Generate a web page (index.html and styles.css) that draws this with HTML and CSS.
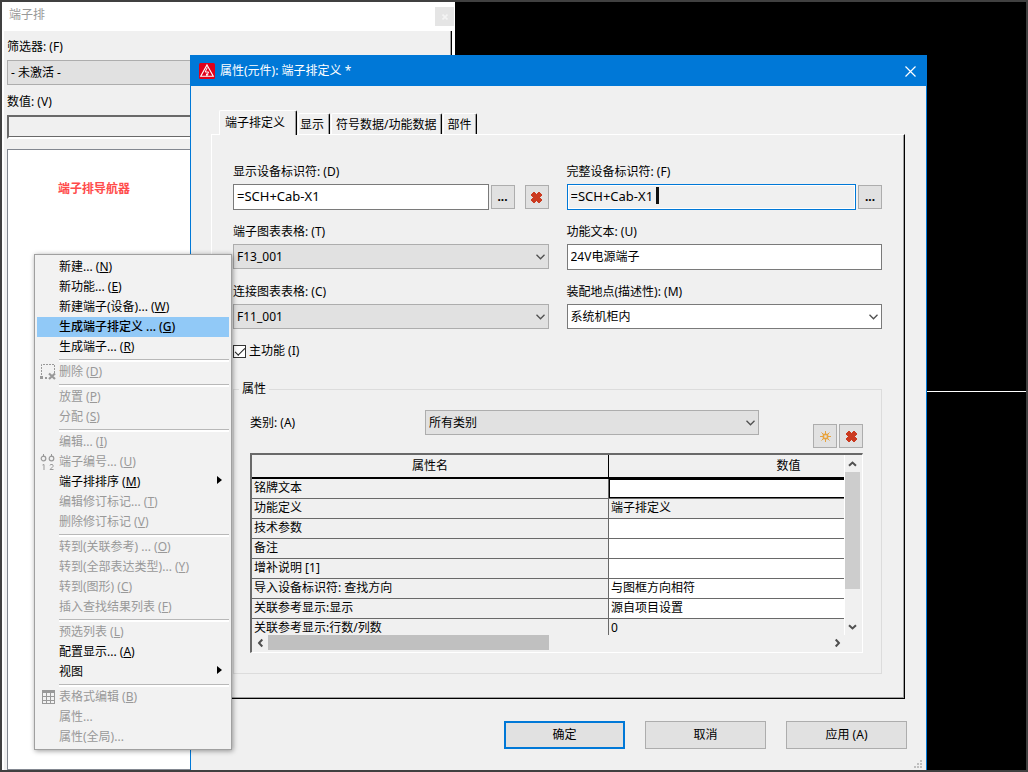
FILE: index.html
```html
<!DOCTYPE html>
<html lang="zh-CN">
<head>
<meta charset="utf-8">
<title>属性(元件): 端子排定义</title>
<link rel="stylesheet" href="styles.css">
</head>
<body>
<svg class="sprite" aria-hidden="true">
  <symbol id="chevron" viewBox="0 0 9 6"><path d="M.5 .8 4.5 4.8 8.5 .8" fill="none" stroke="#505050" stroke-width="1.3"/></symbol>
  <symbol id="arrow" viewBox="0 0 9 6"><path d="M1 4.8 4.5 1.5 8 4.8" fill="none" stroke="#505050" stroke-width="2"/></symbol>
  <symbol id="cross" viewBox="0 0 11 11"><path d="M2 0h2v1h1v1h1V1h1V0h2v1h1v1h1v2h-1v1H9v1h1v1h1v2h-1v1H9v1H7v-1H6V9H5v1H4v1H2v-1H1V9H0V7h1V6h1V5H1V4H0V2h1V1h1z" fill="#cb3a20"/></symbol>
</svg>
<div class="desktop">
  <div class="guide"></div>

  <section class="navigator">
    <header class="navigator-title"><span>端子排</span><button class="navigator-close" aria-label="关闭"><svg viewBox="0 0 6 6"><path d="M.5 .5 5.5 5.5M5.5 .5 .5 5.5" stroke="#f4f4f4" stroke-width="1.6"/></svg></button></header>
    <div class="navigator-body">
      <label for="filter">筛选器: (F)</label>
      <div class="select"><select id="filter"><option>- 未激活 -</option></select></div>
      <label for="value">数值: (V)</label>
      <input id="value" class="sunken" type="text">
      <div class="tree"><span>端子排导航器</span></div>
    </div>
  </section>

  <section class="dialog" role="dialog" aria-labelledby="dialog-title">
    <header class="dialog-title">
      <svg class="logo" viewBox="0 0 16 16"><rect width="16" height="16" rx="1.5" fill="#e2001a"/><path d="M8 2 14.3 13.3H1.7z" fill="none" stroke="#fff" stroke-width="1.1"/><path d="M8.3 4.5 6.2 9h3.4L7.8 12.3M7.4 10.6l.3 2 1.6-1.2" fill="none" stroke="#fff"/></svg>
      <h1 id="dialog-title">属性(元件): 端子排定义 *</h1>
      <button class="dialog-close" aria-label="关闭"><svg viewBox="0 0 11 11"><path d="M.5 .5 10.5 10.5M10.5 .5 .5 10.5" stroke="#fff" stroke-width="1.2"/></svg></button>
    </header>
    <div class="dialog-body">
      <div class="tabs" role="tablist">
        <button class="tab active" role="tab" aria-selected="true">端子排定义</button>
        <button class="tab" role="tab">显示</button>
        <button class="tab" role="tab">符号数据/功能数据</button>
        <button class="tab" role="tab">部件</button>
      </div>
      <div class="page" role="tabpanel">
        <div class="fields">
          <div class="field">
            <label for="dt">显示设备标识符: (D)</label>
            <div class="line"><input id="dt" class="text tag" type="text" value="=SCH+Cab-X1"><button class="small">...</button><button class="small delete" aria-label="删除"><svg class="cross"><use href="#cross"/></svg></button></div>
          </div>
          <div class="field">
            <label for="fdt">完整设备标识符: (F)</label>
            <div class="line"><div class="focus-box"><input id="fdt" class="text tag focused" type="text" value="=SCH+Cab-X1"><span class="caret"></span></div><button class="small">...</button></div>
          </div>
          <div class="field">
            <label for="tform">端子图表表格: (T)</label>
            <div class="select"><select id="tform"><option>F13_001</option></select><svg><use href="#chevron"/></svg></div>
          </div>
          <div class="field">
            <label for="ftext">功能文本: (U)</label>
            <input id="ftext" class="text" type="text" value="24V电源端子">
          </div>
          <div class="field">
            <label for="cform">连接图表表格: (C)</label>
            <div class="select"><select id="cform"><option>F11_001</option></select><svg><use href="#chevron"/></svg></div>
          </div>
          <div class="field">
            <label for="site">装配地点(描述性): (M)</label>
            <div class="select light"><select id="site"><option>系统机柜内</option></select><svg><use href="#chevron"/></svg></div>
          </div>
        </div>
        <label class="check"><input type="checkbox" checked>主功能 (I)</label>
        <fieldset class="group">
          <legend>属性</legend>
          <div class="category">
            <label for="cat">类别: (A)</label>
            <div class="select"><select id="cat"><option>所有类别</option></select><svg><use href="#chevron"/></svg></div>
            <div class="tools">
              <button class="small" aria-label="新建"><svg class="star" viewBox="0 0 11 11"><path d="M5.5 0v3M5.5 8v3M0 5.5h3M8 5.5h3M1.5 1.5l2 2M7.5 7.5l2 2M9.5 1.5l-2 2M3.5 7.5l-2 2" stroke="#e8a33d"/><rect x="3.5" y="3.5" width="4" height="4" fill="none" stroke="#e8a33d" stroke-width="1.6"/></svg></button>
              <button class="small" aria-label="删除"><svg class="cross"><use href="#cross"/></svg></button>
            </div>
          </div>
          <div class="sheet">
            <div class="viewport">
              <table>
                <colgroup><col class="name-col"><col></colgroup>
                <thead><tr><th>属性名</th><th>数值</th></tr></thead>
                <tbody>
                  <tr><th>铭牌文本</th><td class="current"></td></tr>
                  <tr><th>功能定义</th><td class="locked">端子排定义</td></tr>
                  <tr><th>技术参数</th><td></td></tr>
                  <tr><th>备注</th><td></td></tr>
                  <tr><th>增补说明 [1]</th><td></td></tr>
                  <tr><th>导入设备标识符: 查找方向</th><td>与图框方向相符</td></tr>
                  <tr><th>关联参考显示:显示</th><td>源自项目设置</td></tr>
                  <tr><th>关联参考显示:行数/列数</th><td class="locked">0</td></tr>
                </tbody>
              </table>
            </div>
            <div class="vbar"><button aria-label="向上"><svg><use href="#arrow"/></svg></button><div class="track"><div class="thumb"></div></div><button aria-label="向下"><svg class="down"><use href="#arrow"/></svg></button></div>
            <div class="hbar"><button aria-label="向左"><svg class="left"><use href="#arrow"/></svg></button><div class="track"><div class="thumb"></div></div><button aria-label="向右"><svg class="right"><use href="#arrow"/></svg></button></div>
          </div>
        </fieldset>
      </div>
      <footer class="actions">
        <button class="push default">确定</button>
        <button class="push">取消</button>
        <button class="push">应用 (A)</button>
      </footer>
    </div>
    <svg class="grip" viewBox="0 0 8 8"><path d="M6 0h2v2H6zM3 3h2v2H3zM6 3h2v2H6zM0 6h2v2H0zM3 6h2v2H3zM6 6h2v2H6z" fill="#bfbfbf"/></svg>
  </section>

  <div class="menu" role="menu">
    <button class="item" role="menuitem">新建... (<u>N</u>)</button>
    <button class="item" role="menuitem">新功能... (<u>E</u>)</button>
    <button class="item" role="menuitem">新建端子(设备)... (<u>W</u>)</button>
    <button class="item selected" role="menuitem">生成端子排定义 ... (<u>G</u>)</button>
    <button class="item" role="menuitem">生成端子... (<u>R</u>)</button>
    <hr>
    <button class="item" role="menuitem" disabled><svg class="icon" viewBox="0 0 16 16"><path d="M1.5 11V.5h13V9" fill="none" stroke="#999" stroke-dasharray="2 1"/><path d="M0 12h3v3H0zM5 13h2v2H5z" fill="#999"/><path d="M9 9.500l6 5.500M15 9.500l-6 5.500" stroke="#999" stroke-width="2.200"/></svg>删除 (<u>D</u>)</button>
    <hr>
    <button class="item" role="menuitem" disabled>放置 (<u>P</u>)</button>
    <button class="item" role="menuitem" disabled>分配 (<u>S</u>)</button>
    <hr>
    <button class="item" role="menuitem" disabled>编辑... (<u>I</u>)</button>
    <button class="item" role="menuitem" disabled><svg class="icon" viewBox="0 0 16 16"><g fill="none" stroke="#999"><circle cx="3.500" cy="4.500" r="2.300" stroke-width="1.200"/><circle cx="11.500" cy="4.500" r="2.300" stroke-width="1.200"/><path d="M3.500 0v2.500M11.500 0v2.500M2.500 11l1.500-.5V16M10 11.500V11l.5-.5h2l.5.5v1.500l-3 3h3.500"/></g></svg>端子编号... (<u>U</u>)</button>
    <button class="item submenu" role="menuitem">端子排排序 (<u>M</u>)</button>
    <button class="item" role="menuitem" disabled>编辑修订标记... (<u>T</u>)</button>
    <button class="item" role="menuitem" disabled>删除修订标记 (<u>V</u>)</button>
    <hr>
    <button class="item" role="menuitem" disabled>转到(关联参考) ... (<u>O</u>)</button>
    <button class="item" role="menuitem" disabled>转到(全部表达类型)... (<u>Y</u>)</button>
    <button class="item" role="menuitem" disabled>转到(图形) (<u>C</u>)</button>
    <button class="item" role="menuitem" disabled>插入查找结果列表 (<u>F</u>)</button>
    <hr>
    <button class="item" role="menuitem" disabled>预选列表 (<u>L</u>)</button>
    <button class="item" role="menuitem">配置显示... (<u>A</u>)</button>
    <button class="item submenu" role="menuitem">视图</button>
    <hr>
    <button class="item" role="menuitem" disabled><svg class="icon" viewBox="0 0 16 16"><path d="M2 1h13v3H2z" fill="#999"/><path d="M2.500 1v14M6.500 4v11M10.500 4v11M14.500 1v14M2 7.500h13M2 11.500h13M2 14.500h13" fill="none" stroke="#999"/></svg>表格式编辑 (<u>B</u>)</button>
    <button class="item" role="menuitem" disabled>属性...</button>
    <button class="item" role="menuitem" disabled>属性(全局)...</button>
  </div>
</div>
</body>
</html>
```
FILE: styles.css
```css
* { box-sizing: border-box; }
body {
  margin: 0;
  font: 12px/20px "Noto Sans", "Noto Sans CJK SC", sans-serif;
  color: #000;
}
button, input, select, legend, h1 { font: inherit; color: inherit; margin: 0; }
button { padding: 0; border: 0; background: none; }
input, select { border-radius: 0; outline: 0; }
svg { display: block; flex: none; }
.sprite { position: absolute; width: 0; height: 0; }

.desktop {
  position: relative;
  min-height: 100vh;
  overflow: hidden;
  background: #000;
  border: 2px solid #404040;
}
.guide { position: absolute; top: 389px; left: 0; right: 0; height: 1px; background: #fff; }

/* navigator window */
.navigator {
  position: absolute;
  top: 0; bottom: 0; left: 0;
  width: 453px;
  display: flex;
  flex-direction: column;
  padding: 0 3px 0 2px;
  background: #fff;
}
.navigator-title {
  display: flex;
  justify-content: space-between;
  height: 29px;
  padding: 3px 0 0 5px;
  margin-right: -2px;
  color: #999;
}
.navigator-close { display: grid; place-items: center; width: 19px; height: 19px; margin-top: 2px; background: #e5e5e5; }
.navigator-close svg { width: 6px; height: 6px; }
.navigator-body {
  flex: 1;
  display: flex;
  flex-direction: column;
  padding: 6px 0 0 3px;
  background: #f0f0f0;
  border-right: 1px solid #000;
  box-shadow: inset -1px 0 #a0a0a0;
}
.navigator-body .select { margin: 3px 0 7px; }
.sunken {
  width: 100%;
  height: 24px;
  margin-top: 3px;
  background: #f0f0f0;
  border: 2px solid #696969;
  border-color: #696969 #fff #fff #696969;
  box-shadow: inset 0 -1px #696969;
}
.tree {
  flex: 1;
  margin-top: 10px;
  padding: 29px 50px;
  background: #fff;
  border: 1px solid #828790;
  color: #ff4b4b;
  font-weight: 600;
}

/* controls */
.select { display: grid; align-items: center; }
.select > * { grid-area: 1 / 1; }
.select select {
  width: 100%;
  height: 25px;
  appearance: none;
  padding: 0 20px 0 3px;
  background: #e1e1e1;
  border: 1px solid #adadad;
}
.select.light select { background: #fff; border-color: #7a7a7a; }
.select svg { justify-self: end; width: 9px; height: 6px; margin-right: 4px; pointer-events: none; }
.text {
  flex: 1;
  width: 100%;
  min-width: 0;
  height: 26px;
  padding: 0 3px 2px;
  background: #fff;
  border: 1px solid #7a7a7a;
}
.tag { font-size: 13px; }
.text.focused { background: #f0f0f0; border-color: #0078d7; box-shadow: inset 0 0 0 1px #fff; }
.focus-box { position: relative; flex: 1; display: flex; }
.caret { position: absolute; left: 89px; top: 3px; width: 3px; height: 17px; background: #111; }
.small {
  display: grid;
  place-items: center;
  width: 24px;
  height: 24px;
  background: #e1e1e1;
  border: 1px solid #adadad;
  font-weight: 700;
}
.delete { margin-left: 8px; }
.cross, .star { width: 11px; height: 11px; }

/* properties dialog */
.dialog {
  position: absolute;
  top: 53px; bottom: 0; left: 188px; right: 99px;
  display: flex;
  flex-direction: column;
  background: #f0f0f0;
  border: 1px solid #0078d7;
  border-bottom: 0;
}
.dialog-title {
  display: flex;
  align-items: center;
  gap: 5px;
  height: 30px;
  padding: 0 10px 0 8px;
  background: #0078d7;
  color: #fff;
}
.dialog-title h1 { flex: 1; }
.logo { width: 16px; height: 16px; }
.dialog-close svg { width: 11px; height: 11px; }
.dialog-body { padding: 24px 19px 0 20px; }
.tabs { display: flex; align-items: flex-end; padding-left: 8px; }
.tab {
  height: 21px;
  padding: 2px 5px 0 1px;
  margin-right: 1px;
  line-height: 18px;
  border: 1px solid #fff;
  border-right-color: #000;
  border-bottom: 0;
  border-radius: 2px 2px 0 0;
  box-shadow: inset -1px 0 #a0a0a0;
}
.tab + .tab + .tab { padding: 2px 4px 0; }
.tab.active {
  position: relative;
  height: 25px;
  margin-bottom: -1px;
  padding: 0 11px 0 5px;
  background: #f0f0f0;
}
.page {
  margin-right: 2px;
  padding: 27px 22px 24px 21px;
  border: 1px solid #fff;
  border-right-color: #000;
  border-bottom-color: #000;
  box-shadow: inset -1px -1px #a0a0a0;
}
.fields { display: grid; grid-template-columns: 1fr 1fr; gap: 12px 18px; }
.field { display: flex; flex-direction: column; gap: 2px; height: 48px; }
.field .text { flex: 0 0 26px; }
.field .line .text { flex: 1; }
.line { display: flex; align-items: center; gap: 2px; }
.check { display: flex; align-items: center; gap: 3px; margin-top: 11px; }
.check input { appearance: none; width: 13px; height: 13px; margin: 0; background: #fff; border: 1px solid #333; display: grid; place-items: center; }
.check input::before { content: ""; width: 9px; height: 4px; border: solid #222; border-width: 0 0 1px 1px; transform: translateY(-1px) rotate(-45deg); }
.group { margin: 18px 0 0; padding: 11px 18px 20px 16px; border: 1px solid #dcdcdc; min-width: 0; }
.group legend { margin-left: -11px; padding: 0 3px; }
.category { display: grid; grid-template-columns: 175px 1fr auto; align-items: start; }
.category label { padding-top: 3px; }
.tools { display: flex; gap: 2px; padding: 14px 0 0 54px; }

.sheet {
  display: grid;
  grid-template-columns: minmax(0, 1fr) 17px;
  grid-template-rows: 180px 17px;
  margin-top: 5px;
  border: solid #696969;
  border-width: 2px 1px 1px 2px;
  border-right-color: #fff;
  border-bottom-color: #fff;
}
.viewport { overflow: hidden; border-right: 1px solid #fff; }
table { width: 717px; table-layout: fixed; border-collapse: separate; border-spacing: 0; }
.name-col { width: 357px; }
th, td { height: 20px; padding: 0 2px; text-align: left; vertical-align: top; font-weight: 400; line-height: 18px; border: solid #696969; border-width: 0 1px 1px 0; white-space: nowrap; }
thead th { height: 24px; text-align: center; line-height: 22px; border-color: #000; border-bottom-width: 2px; }
td { background: #fff; }
td.locked { background: #f0f0f0; }
td.current { box-shadow: inset 0 0 0 1px #000; }
.vbar, .hbar { display: flex; align-items: center; }
.vbar { flex-direction: column; padding-right: 2px; }
.hbar { padding: 0 0 2px; }
.vbar button, .hbar button { display: grid; place-items: center; width: 16px; height: 17px; }
.hbar button { height: 15px; }
.vbar svg, .hbar svg { width: 9px; height: 6px; }
.down { transform: rotate(180deg); }
.left { transform: rotate(-90deg); }
.right { transform: rotate(90deg); }
.track { flex: 1; }
.vbar .track { width: 15px; }
.vbar .thumb { height: 80%; background: #cdcdcd; }
.hbar .thumb { width: 50%; height: 15px; background: #c0c0c0; }

.actions { display: flex; justify-content: flex-end; gap: 20px; margin-top: 22px; }
.push { width: 121px; height: 28px; background: #e1e1e1; border: 1px solid #adadad; }
.push.default { border: 2px solid #0078d7; }
.grip { position: absolute; right: 4px; bottom: 2px; width: 8px; height: 8px; }

/* context menu */
.menu {
  position: absolute;
  top: 252px; left: 32px;
  width: 198px;
  padding: 2px;
  background: #f2f2f2;
  border: 1px solid #a0a0a0;
  box-shadow: 1px 1px 5px rgba(0, 0, 0, .4);
}
.item {
  position: relative;
  display: block;
  width: 100%;
  height: 20px;
  padding-left: 22px;
  text-align: left;
  white-space: nowrap;
}
.item:disabled { color: #999; }
.item.selected { background: #91c9f7; font-weight: 500; }
.icon { position: absolute; left: 3px; top: 2px; width: 16px; height: 16px; }
.submenu::after {
  content: "";
  position: absolute;
  right: 7px; top: 4px;
  border: 4px solid transparent;
  border-left: 5px solid #000;
  border-right: 0;
}
.menu hr { height: 5px; margin: 0 0 0 22px; border: solid #fff; border-width: 0 0 2px; background: linear-gradient(#b8b8b8, #b8b8b8) 0 2px / 100% 1px no-repeat; }
```
